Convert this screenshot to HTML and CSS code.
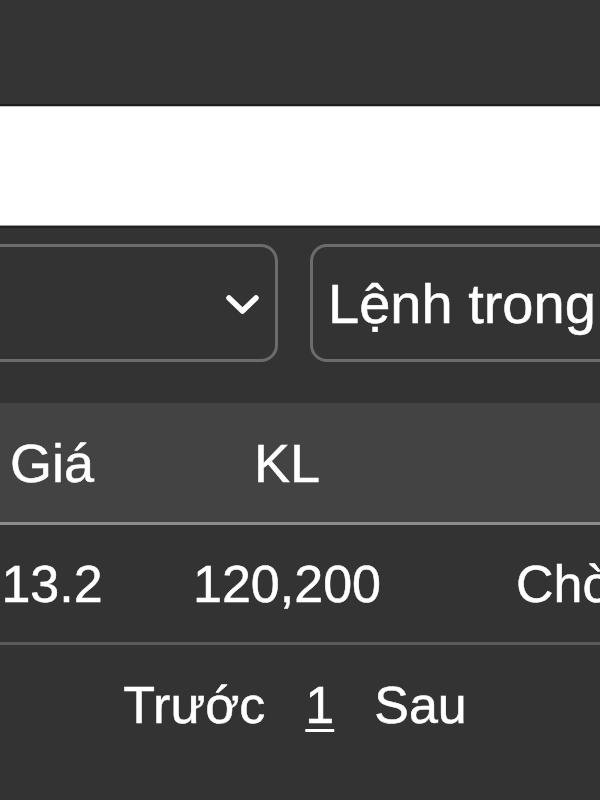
FILE: index.html
```html
<!DOCTYPE html>
<html lang="vi">
<head>
    <meta charset="UTF-8">
    <meta name="viewport" content="width=device-width, initial-scale=1.0">
    <title>Sổ lệnh</title>
    <link rel="stylesheet" href="styles.css">
</head>
<body>
    <div class="topbar"></div>
    <div class="search-bar"></div>

    <div class="filters">
        <div class="box select-box">
            <svg class="chevron" width="35" height="22" viewBox="0 0 35 22">
                <polyline points="4,4 17.5,17 31,4" fill="none" stroke="#fff" stroke-width="5.5" stroke-linecap="round" stroke-linejoin="round"/>
            </svg>
        </div>
        <div class="box text-box">Lệnh trong ngày</div>
    </div>

    <div class="orders">
        <div class="row head">
            <div class="cell c-price">Giá</div>
            <div class="cell c-vol">KL</div>
            <div class="cell c-status"></div>
        </div>
        <div class="row">
            <div class="cell c-price">13.2</div>
            <div class="cell c-vol">120,200</div>
            <div class="cell c-status">Chờ khớp</div>
        </div>
    </div>

    <div class="pager">
        <span class="page-link">Trước</span>
        <span class="page-link current">1</span>
        <span class="page-link">Sau</span>
    </div>
</body>
</html>
```

FILE: styles.css
```css
body {
    font-family: "Liberation Sans", Arial, sans-serif;
    margin: 0;
    background: #333;
    color: #fff;
    width: 600px;
    height: 800px;
    overflow: hidden;
    -webkit-text-stroke: 0.5px #fff;
}

.topbar {
    height: 104px;
    background: #343434;
    border-bottom: 2px solid #1e1e1e;
}

.search-bar {
    height: 118px;
    background: #fff;
    border-top: 1px solid #c4c4c4;
    border-bottom: 1px solid #9a9a9a;
}

.filters {
    display: flex;
    gap: 32px;
    border-top: 2px solid #222;
    padding-top: 16px;
    margin-bottom: 41px;
    white-space: nowrap;
}

.box {
    flex: none;
    height: 112px;
    border: 3px solid #6c6c6c;
    border-radius: 17px;
    display: flex;
    align-items: center;
}

.select-box {
    width: 285px;
    margin-left: -28px;
    justify-content: flex-end;
    padding-right: 15px;
}

.chevron {
    display: block;
    margin-top: 3px;
}

.text-box {
    width: 400px;
    padding-left: 15px;
    font-size: 56px;
    overflow: hidden;
}

.orders {
    white-space: nowrap;
}

.row {
    display: flex;
    align-items: center;
    height: 117px;
    border-bottom: 3px solid #5c5c5c;
    font-size: 52px;
}

.row.head {
    height: 119px;
    background: #434343;
    border-bottom-color: #8c8c8c;
    font-size: 54px;
}

.cell {
    flex: none;
}

.c-price {
    width: 104px;
    text-align: center;
}

.c-vol {
    width: 366px;
    text-align: center;
}

.c-status {
    padding-left: 46px;
}

.pager {
    display: flex;
    justify-content: center;
    gap: 40px;
    padding: 30px 10px 0 0;
    font-size: 52px;
}

.page-link.current {
    text-decoration: underline;
    text-underline-offset: 6px;
    text-decoration-thickness: 3px;
}
```
